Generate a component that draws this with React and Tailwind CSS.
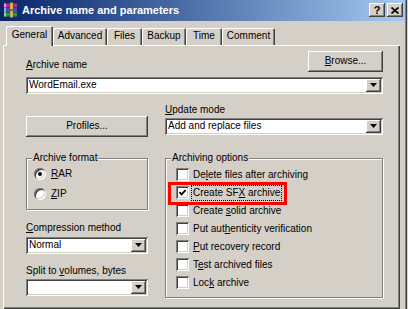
const raised =
  "shadow-[inset_-1px_-1px_0_#404040,inset_1px_1px_0_#ffffff,inset_-2px_-2px_0_#808080,inset_2px_2px_0_#d4d0c8]";
const sunken =
  "shadow-[inset_1px_1px_0_#808080,inset_-1px_-1px_0_#ffffff,inset_2px_2px_0_#404040,inset_-2px_-2px_0_#d4d0c8]";
const tabEdge =
  "shadow-[inset_1px_1px_0_#ffffff,inset_-1px_0_0_#404040,inset_-2px_0_0_#808080]";
const etched = "border border-[#808080] shadow-[inset_1px_1px_0_#ffffff,1px_1px_0_#ffffff]";

function U({ children }) {
  return <span className="underline decoration-1 underline-offset-[1px]">{children}</span>;
}

function Button({ children, className = "" }) {
  return (
    <div className={`flex items-center justify-center bg-[#d4d0c8] ${raised} ${className}`}>
      {children}
    </div>
  );
}

function Combo({ value, className = "" }) {
  return (
    <div className={`flex h-[17px] items-stretch bg-white p-[2px] ${sunken} ${className}`}>
      <div className="flex flex-1 items-center pl-[1px]">{value}</div>
      <div className={`flex w-[15px] items-center justify-center bg-[#d4d0c8] ${raised}`}>
        <svg width="7" height="4" viewBox="0 0 7 4">
          <path d="M0 0h7L3.5 4z" fill="#000" />
        </svg>
      </div>
    </div>
  );
}

function Radio({ checked, children }) {
  return (
    <div className="flex items-center gap-[5px]">
      <div
        className={`flex h-[12px] w-[12px] items-center justify-center rounded-full bg-white ${sunken}`}
      >
        {checked && <div className="h-[4px] w-[4px] rounded-full bg-black" />}
      </div>
      <span>{children}</span>
    </div>
  );
}

function Check({ checked, focus, children }) {
  return (
    <div className="flex h-[18px] items-center gap-[4px]">
      <div className={`h-[13px] w-[13px] bg-white ${sunken}`}>
        {checked && (
          <svg width="13" height="13" viewBox="0 0 13 13">
            <path d="M3.5 6.2 5.6 8.4 9.6 4.2" fill="none" stroke="#000" strokeWidth="1.8" />
          </svg>
        )}
      </div>
      <span className={focus ? "outline-1 outline-dotted outline-black outline-offset-[1px]" : ""}>
        {children}
      </span>
    </div>
  );
}

function Group({ label, className = "", children }) {
  return (
    <div className={`relative ${etched} ${className}`}>
      <span className="absolute -top-[7px] left-[5px] bg-[#d4d0c8] px-[1px]">{label}</span>
      {children}
    </div>
  );
}

function BooksIcon() {
  return (
    <svg width="16" height="16" viewBox="0 0 16 16">
      <rect x="1" y="1.5" width="13" height="4" fill="#c2287e" />
      <rect x="1" y="1.5" width="2" height="4" fill="#f290c8" />
      <rect x="1" y="6" width="13" height="4" fill="#3a4fc0" />
      <rect x="1" y="6" width="2" height="4" fill="#90a8f4" />
      <rect x="1" y="10.5" width="13" height="4" fill="#2c9a3a" />
      <rect x="1" y="10.5" width="2" height="4" fill="#90e090" />
      <rect x="7" y="0.5" width="3" height="15" fill="#dcc070" stroke="#6a4a10" strokeWidth="0.5" />
      <rect x="6.5" y="7" width="4" height="2" fill="#8a6a20" />
    </svg>
  );
}

const tabs = [
  { label: "Advanced", w: "w-[54px]" },
  { label: "Files", w: "w-[35px]" },
  { label: "Backup", w: "w-[44px]" },
  { label: "Time", w: "w-[36px]" },
  { label: "Comment", w: "w-[53px]" },
];

export default function App() {
  return (
    <div className="flex h-[309px] w-[408px] overflow-hidden bg-[#d4d0c8] font-['Liberation_Sans',Arial,sans-serif] text-[10px] leading-[12px] text-black">
      <div className="flex w-[405px] flex-col">
        <div className="flex h-[21px] items-center bg-linear-to-r from-[#0a246a] to-[#a6caf0] pl-[3px] pr-[2px]">
          <BooksIcon />
          <span className="ml-[3px] text-[11px] font-bold leading-[13px] text-white">
            Archive name and parameters
          </span>
          <div className="ml-auto flex gap-[2px]">
            <Button className="h-[14px] w-[16px] text-[11px] font-bold leading-[12px]">?</Button>
            <Button className="h-[14px] w-[16px]">
              <svg width="8" height="7" viewBox="0 0 8 7">
                <path d="M0.5 0.5 7.5 6.5M7.5 0.5 0.5 6.5" stroke="#000" strokeWidth="1.7" />
              </svg>
            </Button>
          </div>
        </div>

        <div className="mt-[5px] flex h-[19px] items-end pl-[6px]">
          <div
            className={`relative z-10 -mb-[1px] flex h-[20px] w-[47px] items-center justify-center rounded-t-[2px] bg-[#d4d0c8] pb-[2px] ${tabEdge}`}
          >
            General
          </div>
          {tabs.map((t) => (
            <div
              key={t.label}
              className={`flex h-[17px] items-center justify-center rounded-t-[2px] pb-[1px] ${t.w} ${tabEdge}`}
            >
              {t.label}
            </div>
          ))}
        </div>

        <div className="ml-[3px] h-[270px] w-[397px] pl-[23px] pr-[17px] pt-[6px] shadow-[inset_1px_1px_0_#ffffff,inset_-1px_-1px_0_#404040,inset_-2px_-2px_0_#808080]">
          <div className="flex h-[21px] items-end justify-between">
            <span className="mb-[1px]">
              <U>A</U>rchive name
            </span>
            <Button className="h-[21px] w-[75px]">
              <span>
                <U>B</U>rowse...
              </span>
            </Button>
          </div>
          <Combo value="WordEmail.exe" className="mt-[5px]" />

          <div className="mt-[10px] flex gap-[17px]">
            <div className="flex w-[122px] flex-col">
              <Button className="mt-[12px] h-[21px]">Profiles...</Button>
              <Group label="Archive format" className="mt-[21px] h-[52px]">
                <div className="flex flex-col gap-[8px] pl-[7px] pt-[9px]">
                  <Radio checked>
                    <U>R</U>AR
                  </Radio>
                  <Radio>
                    <U>Z</U>IP
                  </Radio>
                </div>
              </Group>
              <span className="mt-[12px]">
                <U>C</U>ompression method
              </span>
              <Combo value="Normal" className="mt-[3px]" />
              <span className="mt-[11px]">
                Split to <U>v</U>olumes, bytes
              </span>
              <Combo value="" className="mt-[2px]" />
            </div>

            <div className="flex w-[218px] flex-col">
              <span>
                <U>U</U>pdate mode
              </span>
              <Combo value="Add and replace files" className="mt-[2px]" />
              <Group label="Archiving options" className="mt-[23px] h-[140px]">
                <div className="flex flex-col pl-[10px] pt-[7px]">
                  <Check>
                    De<U>l</U>ete files after archiving
                  </Check>
                  <Check checked focus>
                    Create SF<U>X</U> archive
                  </Check>
                  <Check>
                    Create <U>s</U>olid archive
                  </Check>
                  <Check>
                    Put aut<U>h</U>enticity verification
                  </Check>
                  <Check>
                    <U>P</U>ut recovery record
                  </Check>
                  <Check>
                    T<U>e</U>st archived files
                  </Check>
                  <Check>
                    Loc<U>k</U> archive
                  </Check>
                </div>
                <div className="absolute left-[2px] top-[23px] h-[23px] w-[119px] border-[3px] border-[#ff0000]" />
              </Group>
            </div>
          </div>
        </div>
      </div>
      <div className="w-[3px] shadow-[inset_1px_0_0_#808080,inset_2px_0_0_#404040]" />
    </div>
  );
}
